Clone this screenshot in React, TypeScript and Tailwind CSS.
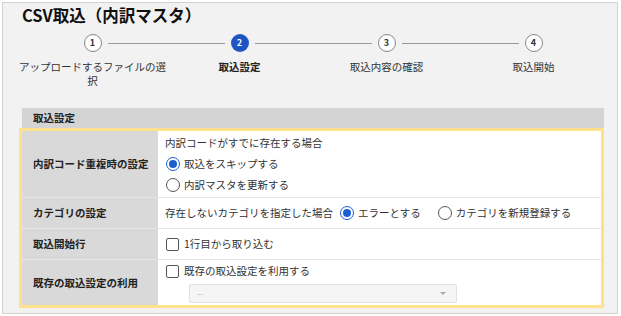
import React from 'react'

const font = { fontFamily: '"Noto Sans CJK JP", "Noto Sans", sans-serif' }

const steps = [
  { no: 1, label: 'アップロードするファイルの選', label2: '択' },
  { no: 2, label: '取込設定', active: true },
  { no: 3, label: '取込内容の確認' },
  { no: 4, label: '取込開始' },
]

function Radio({ checked }: { checked?: boolean }) {
  return checked ? (
    <span className="w-[14px] h-[14px] rounded-full border-[1.5px] border-[#1a5fd0] flex items-center justify-center shrink-0">
      <span className="w-[8px] h-[8px] rounded-full bg-[#1a5fd0]" />
    </span>
  ) : (
    <span className="w-[14px] h-[14px] rounded-full border border-[#555] bg-white shrink-0" />
  )
}

function Checkbox() {
  return <span className="w-[13px] h-[13px] rounded-[2px] border border-[#555] bg-white shrink-0" />
}

export default function App() {
  return (
    <div className="w-[621px] h-[316px] bg-white pt-[2px] pl-[2px] text-[#333]" style={font}>
      <div className="w-[616px] h-[312px] border border-[#d2d2d2] bg-[#f2f2f2] overflow-hidden">
        <h1 className="pl-[19px] text-[16.5px] leading-[22px] font-bold text-[#111] pt-[1px]">CSV取込（内訳マスタ）</h1>

        {/* Stepper */}
        <div className="flex ml-[16px] mt-[8px]">
          {steps.map((s, i) => (
            <div key={s.no} className="w-[147px] flex flex-col items-center">
              <div className="w-full flex items-center">
                <div className={`flex-1 h-px mr-[6px] ${i === 0 ? '' : 'bg-[#999]'}`} />
                {s.active ? (
                  <span className="w-[18px] h-[18px] rounded-full bg-[#1e55c3] text-white text-[9px] font-bold flex items-center justify-center">
                    {s.no}
                  </span>
                ) : (
                  <span className="w-[18px] h-[18px] rounded-full border border-[#888] bg-white text-[#333] text-[9px] font-bold flex items-center justify-center">
                    {s.no}
                  </span>
                )}
                <div className={`flex-1 h-px ml-[6px] ${i === steps.length - 1 ? '' : 'bg-[#999]'}`} />
              </div>
              <div className={`mt-[8px] text-[10.5px] leading-[14px] text-center ${s.active ? 'font-bold text-[#222]' : 'text-[#333]'}`}>
                {s.label}
                {s.label2 && (
                  <>
                    <br />
                    {s.label2}
                  </>
                )}
              </div>
            </div>
          ))}
        </div>

        {/* Settings table */}
        <div className="ml-[16px] mt-[20px] w-[585px]">
          <div className="ml-[3px] h-[20px] bg-[#d4d4d4] flex items-center pl-[11px] text-[10.5px] font-bold text-[#222]">
            取込設定
          </div>
          <div className="border-[3px] border-[#fde18b] bg-white text-[10.5px]">
            {/* Row 1 */}
            <div className="flex h-[67px] border-b border-[#e6e6e6]">
              <div className="w-[136px] bg-[#d9d9d9] flex items-center pl-[11px] font-bold text-[#222]">内訳コード重複時の設定</div>
              <div className="flex-1 pl-[7px] pt-[4px] flex flex-col gap-[5px]">
                <div className="leading-[16px]">内訳コードがすでに存在する場合</div>
                <label className="flex items-center gap-[4px] leading-[16px] pl-px">
                  <Radio checked />
                  取込をスキップする
                </label>
                <label className="flex items-center gap-[4px] leading-[16px] pl-px">
                  <Radio />
                  内訳マスタを更新する
                </label>
              </div>
            </div>
            {/* Row 2 */}
            <div className="flex h-[31px] border-b border-[#e6e6e6]">
              <div className="w-[136px] bg-[#d9d9d9] flex items-center pl-[11px] font-bold text-[#222]">カテゴリの設定</div>
              <div className="flex-1 pl-[7px] flex items-center">
                <span>存在しないカテゴリを指定した場合</span>
                <label className="flex items-center gap-[4px] ml-[7px]">
                  <Radio checked />
                  エラーとする
                </label>
                <label className="flex items-center gap-[4px] ml-[17px]">
                  <Radio />
                  カテゴリを新規登録する
                </label>
              </div>
            </div>
            {/* Row 3 */}
            <div className="flex h-[31px] border-b border-[#e6e6e6]">
              <div className="w-[136px] bg-[#d9d9d9] flex items-center pl-[11px] font-bold text-[#222]">取込開始行</div>
              <div className="flex-1 pl-[8px] flex items-center">
                <label className="flex items-center gap-[5px]">
                  <Checkbox />
                  1行目から取り込む
                </label>
              </div>
            </div>
            {/* Row 4 */}
            <div className="flex h-[45px]">
              <div className="w-[136px] bg-[#d9d9d9] flex items-center pl-[11px] font-bold text-[#222]">既存の取込設定の利用</div>
              <div className="flex-1 pl-[8px] pt-[3px]">
                <label className="flex items-center gap-[5px] leading-[16px]">
                  <Checkbox />
                  既存の取込設定を利用する
                </label>
                <div className="ml-[23px] mt-[5px] w-[268px] h-[19px] bg-[#f5f5f5] border border-[#e2e2e2] rounded-[2px] flex items-center justify-between px-[7px]">
                  <span className="text-[#c4c4c4] text-[9px]">--</span>
                  <span className="w-0 h-0 border-l-[3px] border-r-[3px] border-t-[3px] border-l-transparent border-r-transparent border-t-[#aaa] mr-[3px]" />
                </div>
              </div>
            </div>
          </div>
        </div>
      </div>
    </div>
  )
}
